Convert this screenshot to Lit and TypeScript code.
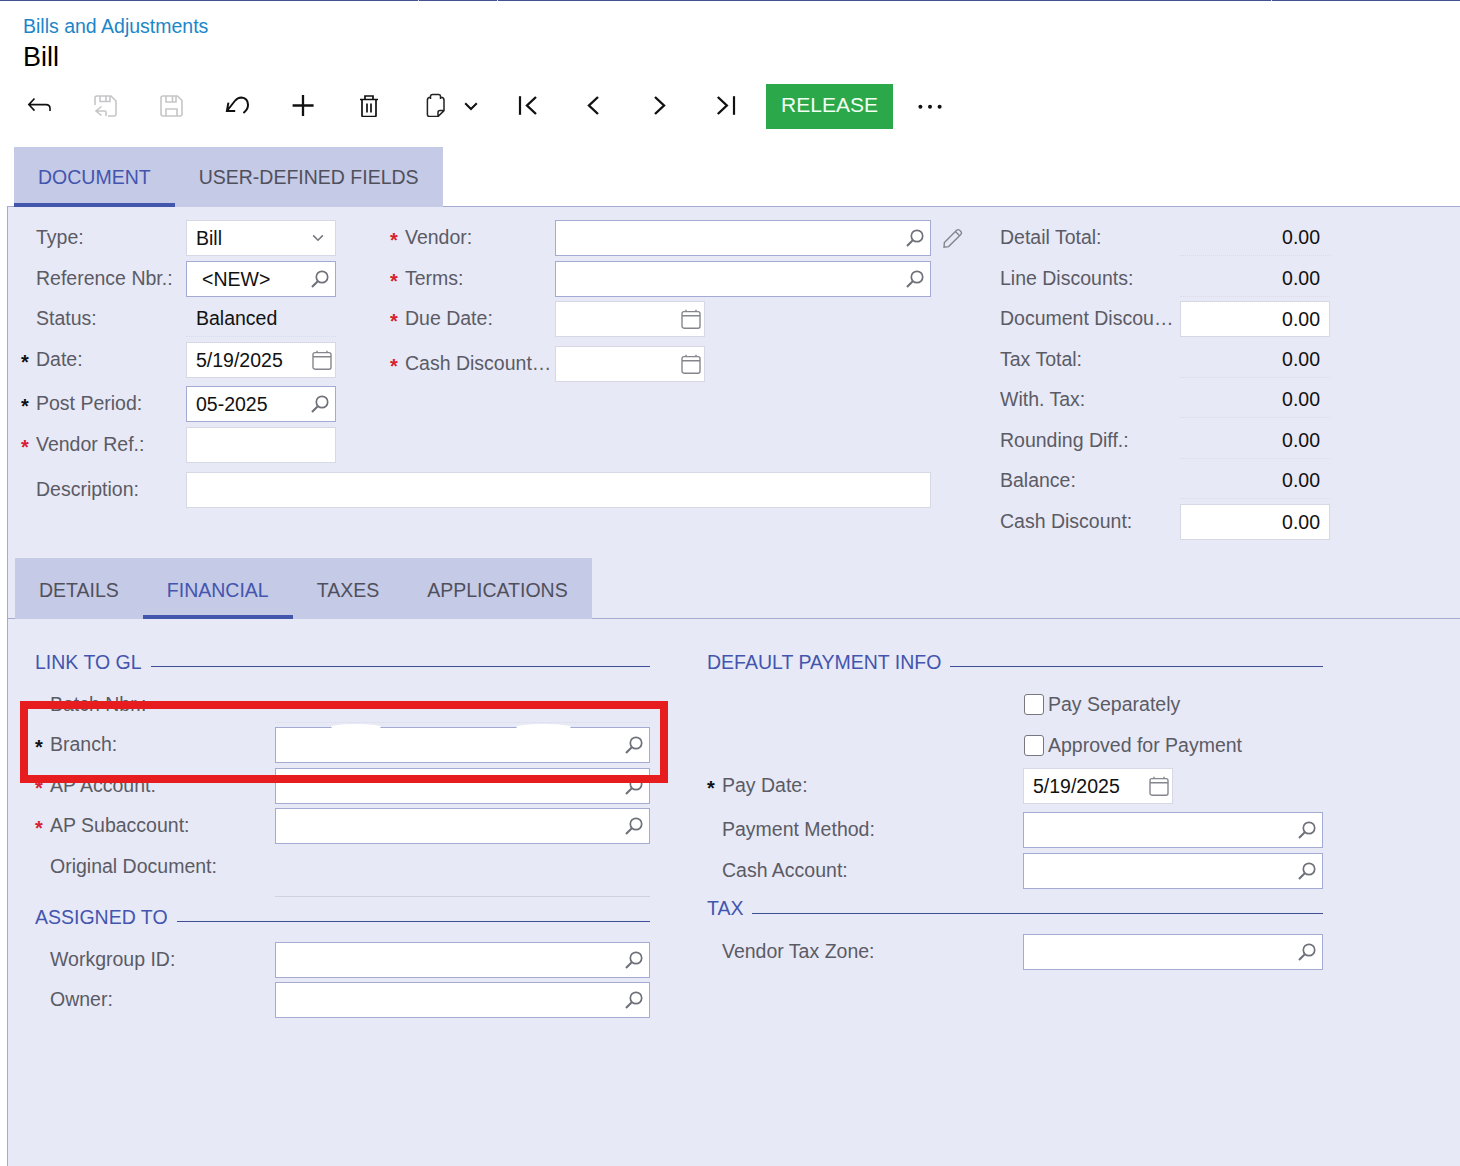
import { LitElement, html, css, svg } from "lit";
import { customElement } from "lit/decorators.js";

const search = html`<svg class="ic-search" width="18" height="18" viewBox="0 0 18 18" fill="none" stroke="#6f7179"><circle cx="11" cy="7" r="5.7" stroke-width="1.7"/><path d="M6.8 11.2 1 17" stroke-width="2.1"/></svg>`;
const calendar = html`<svg class="ic-cal" width="20" height="20" viewBox="0 0 20 20" fill="none" stroke="#85868d" stroke-width="1.4"><rect x="1" y="2.6" width="18" height="16.6" rx="2"/><path d="M1 6.8H19M5 .8V2.6M15 .8V2.6"/></svg>`;
const chevron = html`<svg class="ic-chev" width="12" height="8" viewBox="0 0 12 8" fill="none" stroke="#77787f" stroke-width="1.6"><path d="M1.2 1.4 6 6.2 10.8 1.4"/></svg>`;

const toolIcon = (body: unknown, color = "#111", sw = 1.6) =>
  svg`<svg width="24" height="24" viewBox="0 0 24 24" fill="none" stroke=${color} stroke-width=${sw}>${body}</svg>`;

const icons = {
  back: toolIcon(svg`<path d="M7.5 5.5 1.8 11.6 7.5 17.6M1.8 11.6H19Q23 11.6 23 15.4V18"/>`),
  saveBack: toolIcon(svg`<path d="M2 12V5Q2 3 4 3H18L23 8V21Q23 23 21 23H15M7 3V8.5H17V3M13 3V8.5M8.5 13.5 3 18 8.5 22.5M3 18H12Q13 18 13 19.5V23"/>`, "#c6c6c8"),
  save: toolIcon(svg`<path d="M4 3H18.5L23 7.5V21Q23 23 21 23H4Q2 23 2 21V5Q2 3 4 3ZM7 3V9H17V3M13.5 3V9M7 23V16H18V23"/>`, "#c6c6c8"),
  undo: toolIcon(svg`<path d="M3.4 9.6 1.9 18 10.2 18M1.9 18 9.8 8Q12.6 4.6 16.4 4.6 22.6 5 23 11.6 23.2 16.4 18.4 20"/>`, "#111", 2),
  plus: toolIcon(svg`<path d="M1.6 12.5H22.6M12 2V23"/>`, "#111", 2.3),
  trash: toolIcon(svg`<path d="M3 6.5H21M8 6.2V3H16V6.2M5 6.6V22.6Q5 23.6 6 23.6H18Q19 23.6 19 22.6V6.6M10 10.5V19.5M14 10.5V19.5"/>`, "#111", 1.7),
  copy: toolIcon(svg`<path d="M7.5 4.2Q4.4 4.4 4.4 7V21.4Q4.4 23.6 6.6 23.6H15L21 17.6V7Q21 4.4 18 4.2M7.5 6V3Q7.8 1.4 9.5 1.4H15.5Q17.4 1.4 17.5 3V6M15 23.6V19.6Q15 17.6 17 17.6H21"/>`, "#222", 1.5),
  chev: toolIcon(svg`<path d="M6.2 10.2 12 16 17.8 10.2"/>`, "#111", 2),
  first: toolIcon(svg`<path d="M5 3.2V21.8"/><path d="M21 4 12 12.5 21 21" stroke-width="2.4"/>`, "#111", 2.2),
  prev: toolIcon(svg`<path d="M17 4 8 12.5 17 21"/>`, "#111", 2.4),
  next: toolIcon(svg`<path d="M8 4 17 12.5 8 21"/>`, "#111", 2.4),
  last: toolIcon(svg`<path d="M4.8 4 13.8 12.5 4.8 21" stroke-width="2.4"/><path d="M21 3.2V21.8"/>`, "#111", 2.2),
  dots: html`<svg width="24" height="24" viewBox="0 0 24 24" fill="#111"><circle cx="2.4" cy="13.8" r="2"/><circle cx="12" cy="13.8" r="2"/><circle cx="21.6" cy="13.8" r="2"/></svg>`,
};

@customElement("app-root")
export class AppRoot extends LitElement {
  static styles = css`
    :host { display: block; width: 1460px; height: 1166px; overflow: hidden; position: relative; background: #fff;
      font-family: "Liberation Sans", Arial, sans-serif; font-size: 19.5px; color: #111; }
    * { box-sizing: border-box; }
    .topline { height: 1px; background: linear-gradient(90deg, #42528f 418px, #d6daec 418px, #d6daec 419px, #42528f 419px, #42528f 497px, #d6daec 497px, #d6daec 498px, #42528f 498px, #42528f 1271px, #d6daec 1271px, #d6daec 1272px, #42528f 1272px); }
    .crumb { margin: 13px 0 0 23px; height: 24px; line-height: 24px; color: #1b86c8; }
    .title { margin: 3px 0 0 23px; height: 32px; line-height: 32px; font-size: 27px; color: #000; }
    .toolbar { display: flex; margin-top: 11px; padding-left: 6px; height: 45px; }
    .tb { width: 66px; height: 45px; padding-top: 9px; display: flex; justify-content: center; }
    .tb svg { display: block; }
    .tb.drop { width: 24px; margin: 0 11px 0 -9px; }
    .tb.dots { width: 24px; margin-left: 25px; }
    .release { width: 127px; height: 45px; margin-left: 8px; background: #2ba84a; color: #f2fff2; font-size: 21px;
      display: flex; align-items: center; justify-content: center; padding-bottom: 3px; }

    .tabs { display: inline-flex; background: #c5cae6; position: relative; z-index: 1; vertical-align: top; }
    .tabs.one { margin: 18px 0 -1px 14px; height: 60px; }
    .tabs.two { margin: 0 0 -1px 7px; height: 61px; padding-top: 3px; }
    .tabwrap { height: 77px; }
    .tab { padding: 0 24px; display: flex; align-items: center; color: #50505c; }
    .tab.on { color: #4355ae; box-shadow: inset 0 -4px 0 #4356ad; }
    .tabs.two .tab.on { margin-top: -3px; padding-top: 3px; }

    .panel { height: 960px; margin-left: 7px; background: #e7e9f6; border-left: 1px solid #a3abd3; border-top: 1px solid #a3abd3; }
    .form { display: flex; padding: 13px 0 18px 13px; }
    .mainform { width: 910px; }
    .pair { display: flex; }
    .col-a { width: 315px; }
    .col-b { width: 541px; margin-left: 54px; }
    .col-c { margin-left: 69px; }

    .row { display: flex; align-items: center; height: 36px; }
    .g4 { margin-top: 4px; } .g5 { margin-top: 5px; } .g8 { margin-top: 8px; } .g9 { margin-top: 9px; }
    .star { width: 15px; flex: none; height: 24px; line-height: 24px; font-size: 20px; font-weight: bold; transform: translateY(2px); color: #111; }
    .star.req { color: #d8202f; }
    .lab { color: #5b5b65; white-space: nowrap; flex: none; padding-bottom: 2px; line-height: 24px; }
    .a .lab { width: 150px; }
    .b .lab { width: 150px; }
    .c .lab { width: 180px; padding-right: 6px; }
    .d .lab { width: 225px; }
    .e .lab { width: 301px; }
    .field { height: 36px; display: flex; align-items: center; justify-content: space-between; background: #fff;
      border: 1px solid #d6d8e3; padding: 0 6px 0 9px; flex: none; position: relative; }
    .field.blue { border-color: #a3abd3; }
    .field.cal { padding-right: 3px; }
    .field.drop { padding-right: 11px; }
    .field.plain { background: transparent; border: 0; border-bottom: 1px dotted #d8dbe9; padding-left: 10px; }
    .w150 { width: 150px; } .w376 { width: 376px; } .w375 { width: 375px; } .w300 { width: 300px; } .w745 { width: 745px; }
    .newtxt { padding-left: 6px; }
    .num { width: 150px; justify-content: flex-end; padding: 0 9px 0 0; }
    .num.plain { padding-right: 10px; }
    .pencil { margin-left: 12px; flex: none; }
    .field svg { flex: none; }

    .rule { height: 1px; background: #a3abd3; }
    .lower { display: flex; padding: 31px 0 0 27px; }
    .group-l { width: 615px; }
    .group-r { width: 616px; margin-left: 57px; }
    .legend { display: flex; height: 24px; line-height: 24px; color: #4355ae; white-space: nowrap; }
    .legend i { flex: 1; height: 1px; background: #3f4f96; margin: 16px 0 0 9px; }
    .legend.tax i { margin-top: 17px; }
    .legend.assigned { margin-top: 8px; margin-bottom: 13px; }
    .legend.tax { margin-top: 7px; margin-bottom: 14px; }
    .legend.first { margin-bottom: 12px; }
    .row.batch { height: 37px; }
    .row.batch .field { height: 37px; }
    .row.orig { height: 49px; align-items: flex-start; }
    .row.orig .lab { margin-top: 6px; }
    .field.origval { height: 49px; border-bottom: 1px solid #cfd2dc; }
    .check { display: flex; align-items: center; height: 36px; padding-left: 316.5px; color: #5b5b65; }
    .check.first { margin-top: 2px; }
    .box { width: 20.5px; height: 21px; background: #fff; border: 1.5px solid #77777f; border-radius: 3px; margin-right: 4px; flex: none; }
    .spot { position: absolute; background: #fff; border-radius: 50%; height: 6px; top: -4px; }
    .spot.s1 { left: 55px; width: 50px; }
    .spot.s2 { left: 240px; width: 55px; }
    .redbox { position: absolute; left: 20px; top: 701px; width: 648px; height: 82px; border: 8px solid #e61c1e; pointer-events: none; }
  `;

  private star(req?: string) {
    if (!req) return html`<span class="star"></span>`;
    return html`<span class="star ${req === "r" ? "req" : ""}">*</span>`;
  }

  render() {
    return html`
      <div class="topline"></div>
      <div class="crumb">Bills and Adjustments</div>
      <div class="title">Bill</div>
      <div class="toolbar">
        <div class="tb">${icons.back}</div>
        <div class="tb">${icons.saveBack}</div>
        <div class="tb">${icons.save}</div>
        <div class="tb">${icons.undo}</div>
        <div class="tb">${icons.plus}</div>
        <div class="tb">${icons.trash}</div>
        <div class="tb">${icons.copy}</div>
        <div class="tb drop">${icons.chev}</div>
        <div class="tb">${icons.first}</div>
        <div class="tb">${icons.prev}</div>
        <div class="tb">${icons.next}</div>
        <div class="tb">${icons.last}</div>
        <div class="release">RELEASE</div>
        <div class="tb dots">${icons.dots}</div>
      </div>
      <div class="tabwrap">
        <div class="tabs one">
          <div class="tab on">DOCUMENT</div>
          <div class="tab">USER-DEFINED FIELDS</div>
        </div>
      </div>
      <div class="panel">
        <div class="form">
          <div class="mainform">
            <div class="pair">
              <div class="col-a a">
                <div class="row">${this.star()}<span class="lab">Type:</span><div class="field drop w150"><span>Bill</span>${chevron}</div></div>
                <div class="row g5">${this.star()}<span class="lab">Reference Nbr.:</span><div class="field blue w150"><span class="newtxt">&lt;NEW&gt;</span>${search}</div></div>
                <div class="row g4">${this.star()}<span class="lab">Status:</span><div class="field plain w150"><span>Balanced</span></div></div>
                <div class="row g5">${this.star("k")}<span class="lab">Date:</span><div class="field cal w150"><span>5/19/2025</span>${calendar}</div></div>
                <div class="row g8">${this.star("k")}<span class="lab">Post Period:</span><div class="field blue w150"><span>05-2025</span>${search}</div></div>
                <div class="row g5">${this.star("r")}<span class="lab">Vendor Ref.:</span><div class="field w150"></div></div>
              </div>
              <div class="col-b b">
                <div class="row">${this.star("r")}<span class="lab">Vendor:</span><div class="field blue w376"><span></span>${search}</div>
                  <svg class="pencil" width="20" height="20" viewBox="0 0 20 20" fill="none" stroke="#85868d" stroke-width="1.4"><path d="M1.4 14.4 13.6 2.2Q15 1 16.6 2.2L18 3.6Q19 5 17.8 6.4L5.6 18.6 1 19.2ZM12.4 3.6 16.6 7.8"/></svg>
                </div>
                <div class="row g5">${this.star("r")}<span class="lab">Terms:</span><div class="field blue w376"><span></span>${search}</div></div>
                <div class="row g4">${this.star("r")}<span class="lab">Due Date:</span><div class="field cal w150"><span></span>${calendar}</div></div>
                <div class="row g9">${this.star("r")}<span class="lab">Cash Discount…</span><div class="field cal w150"><span></span>${calendar}</div></div>
              </div>
            </div>
            <div class="row g9 a">${this.star()}<span class="lab">Description:</span><div class="field w745"></div></div>
          </div>
          <div class="col-c c">
            <div class="row"><span class="lab">Detail Total:</span><div class="field plain num">0.00</div></div>
            <div class="row g5"><span class="lab">Line Discounts:</span><div class="field plain num">0.00</div></div>
            <div class="row g4"><span class="lab">Document Discou…</span><div class="field num">0.00</div></div>
            <div class="row g5"><span class="lab">Tax Total:</span><div class="field plain num">0.00</div></div>
            <div class="row g4"><span class="lab">With. Tax:</span><div class="field plain num">0.00</div></div>
            <div class="row g5"><span class="lab">Rounding Diff.:</span><div class="field plain num">0.00</div></div>
            <div class="row g4"><span class="lab">Balance:</span><div class="field plain num">0.00</div></div>
            <div class="row g5"><span class="lab">Cash Discount:</span><div class="field num">0.00</div></div>
          </div>
        </div>
        <div class="tabs two">
          <div class="tab">DETAILS</div>
          <div class="tab on">FINANCIAL</div>
          <div class="tab">TAXES</div>
          <div class="tab">APPLICATIONS</div>
        </div>
        <div class="rule"></div>
        <div class="lower">
          <div class="group-l d">
            <div class="legend first">LINK TO GL<i></i></div>
            <div class="row batch">${this.star()}<span class="lab">Batch Nbr.:</span><div class="field plain w375"></div></div>
            <div class="row g4">${this.star("k")}<span class="lab">Branch:</span><div class="field blue w375"><span class="spot s1"></span><span class="spot s2"></span><span></span>${search}</div></div>
            <div class="row g5">${this.star("r")}<span class="lab">AP Account:</span><div class="field blue w375"><span></span>${search}</div></div>
            <div class="row g4">${this.star("r")}<span class="lab">AP Subaccount:</span><div class="field blue w375"><span></span>${search}</div></div>
            <div class="row orig g4">${this.star()}<span class="lab">Original Document:</span><div class="field plain origval w375"></div></div>
            <div class="legend assigned">ASSIGNED TO<i></i></div>
            <div class="row">${this.star()}<span class="lab">Workgroup ID:</span><div class="field blue w375"><span></span>${search}</div></div>
            <div class="row g4">${this.star()}<span class="lab">Owner:</span><div class="field blue w375"><span></span>${search}</div></div>
          </div>
          <div class="group-r e">
            <div class="legend first">DEFAULT PAYMENT INFO<i></i></div>
            <div class="check first"><span class="box"></span>Pay Separately</div>
            <div class="check g5"><span class="box"></span>Approved for Payment</div>
            <div class="row g5">${this.star("k")}<span class="lab">Pay Date:</span><div class="field cal w150"><span>5/19/2025</span>${calendar}</div></div>
            <div class="row g8">${this.star()}<span class="lab">Payment Method:</span><div class="field blue w300"><span></span>${search}</div></div>
            <div class="row g5">${this.star()}<span class="lab">Cash Account:</span><div class="field blue w300"><span></span>${search}</div></div>
            <div class="legend tax">TAX<i></i></div>
            <div class="row">${this.star()}<span class="lab">Vendor Tax Zone:</span><div class="field blue w300"><span></span>${search}</div></div>
          </div>
        </div>
      </div>
      <div class="redbox"></div>
    `;
  }
}
